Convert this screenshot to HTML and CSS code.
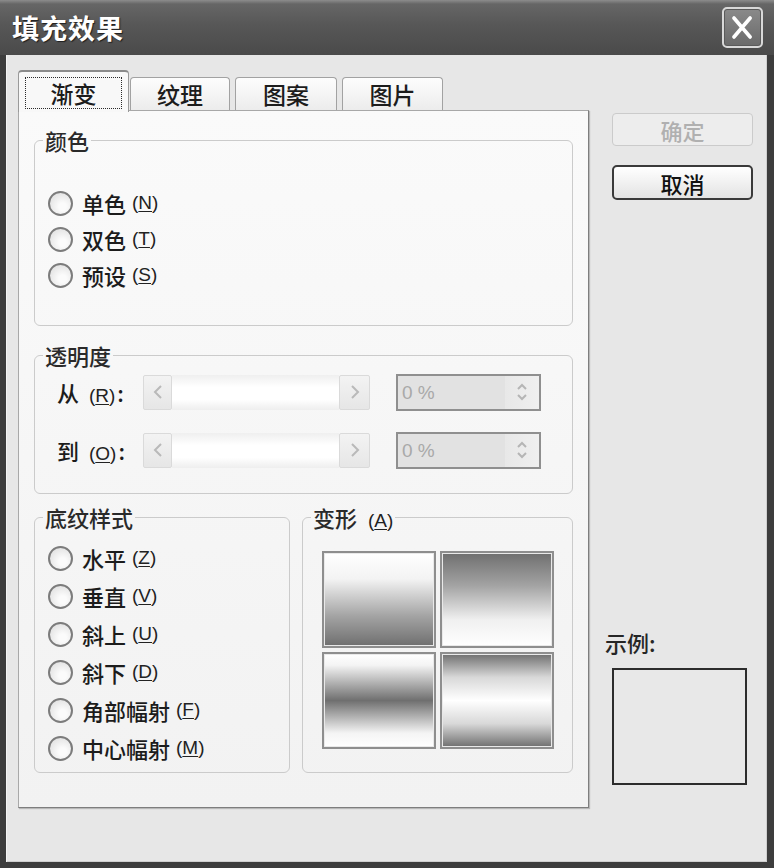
FILE: index.html
```html
<!DOCTYPE html>
<html lang="zh-CN">
<head>
    <meta charset="UTF-8">
    <meta name="viewport" content="width=device-width, initial-scale=1.0">
    <title>填充效果</title>
    <link rel="stylesheet" href="styles.css">
</head>
<body>
    <div class="window">
        <div class="titlebar">
            <span class="title">填充效果</span>
            <button class="close" aria-label="关闭">
                <svg viewBox="0 0 41 41" width="37" height="37">
                    <path d="M11 10 L29 31 M29 10 L11 31" stroke="#fff" stroke-width="4" stroke-linecap="round" fill="none"/>
                </svg>
            </button>
        </div>

        <div class="client">
            <div class="tabs-area">
                <div class="tab-strip">
                    <div class="tab active"><span class="focus">渐变</span></div>
                    <div class="tab">纹理</div>
                    <div class="tab">图案</div>
                    <div class="tab">图片</div>
                </div>

                <div class="tab-panel">
                    <fieldset class="group group-color">
                        <legend>颜色</legend>
                        <label class="radio"><span class="dot"></span>单色 <span class="key">(<u>N</u>)</span></label>
                        <label class="radio"><span class="dot"></span>双色 <span class="key">(<u>T</u>)</span></label>
                        <label class="radio"><span class="dot"></span>预设 <span class="key">(<u>S</u>)</span></label>
                    </fieldset>

                    <fieldset class="group group-alpha">
                        <legend>透明度</legend>
                        <div class="alpha-row">
                            <span class="row-label">从 <span class="key">(<u>R</u>)</span>:</span>
                            <div class="scroll">
                                <span class="sbtn"><svg viewBox="0 0 10 16" width="10" height="16"><path d="M8 2 L2 8 L8 14" stroke="#b9b9b9" stroke-width="2" fill="none"/></svg></span>
                                <span class="track"></span>
                                <span class="sbtn"><svg viewBox="0 0 10 16" width="10" height="16"><path d="M2 2 L8 8 L2 14" stroke="#b9b9b9" stroke-width="2" fill="none"/></svg></span>
                            </div>
                            <div class="spin">
                                <span class="val">0 %</span>
                                <span class="arrows">
                                    <svg viewBox="0 0 12 22" width="12" height="22"><path d="M2 8 L6 4 L10 8 M2 14 L6 18 L10 14" stroke="#b5b5b5" stroke-width="2" fill="none"/></svg>
                                </span>
                            </div>
                        </div>
                        <div class="alpha-row">
                            <span class="row-label">到 <span class="key">(<u>O</u>)</span>:</span>
                            <div class="scroll">
                                <span class="sbtn"><svg viewBox="0 0 10 16" width="10" height="16"><path d="M8 2 L2 8 L8 14" stroke="#b9b9b9" stroke-width="2" fill="none"/></svg></span>
                                <span class="track"></span>
                                <span class="sbtn"><svg viewBox="0 0 10 16" width="10" height="16"><path d="M2 2 L8 8 L2 14" stroke="#b9b9b9" stroke-width="2" fill="none"/></svg></span>
                            </div>
                            <div class="spin">
                                <span class="val">0 %</span>
                                <span class="arrows">
                                    <svg viewBox="0 0 12 22" width="12" height="22"><path d="M2 8 L6 4 L10 8 M2 14 L6 18 L10 14" stroke="#b5b5b5" stroke-width="2" fill="none"/></svg>
                                </span>
                            </div>
                        </div>
                    </fieldset>

                    <div class="bottom-row">
                        <fieldset class="group group-style">
                            <legend>底纹样式</legend>
                            <label class="radio"><span class="dot"></span>水平 <span class="key">(<u>Z</u>)</span></label>
                            <label class="radio"><span class="dot"></span>垂直 <span class="key">(<u>V</u>)</span></label>
                            <label class="radio"><span class="dot"></span>斜上 <span class="key">(<u>U</u>)</span></label>
                            <label class="radio"><span class="dot"></span>斜下 <span class="key">(<u>D</u>)</span></label>
                            <label class="radio"><span class="dot"></span>角部幅射 <span class="key">(<u>F</u>)</span></label>
                            <label class="radio"><span class="dot"></span>中心幅射 <span class="key">(<u>M</u>)</span></label>
                        </fieldset>

                        <fieldset class="group group-variant">
                            <legend>变形 <span class="key">(<u>A</u>)</span></legend>
                            <div class="variants">
                                <div class="variant v1"></div>
                                <div class="variant v2"></div>
                                <div class="variant v3"></div>
                                <div class="variant v4"></div>
                            </div>
                        </fieldset>
                    </div>
                </div>
            </div>

            <div class="side">
                <button class="btn" disabled>确定</button>
                <button class="btn btn-cancel">取消</button>
                <div class="sample-label">示例:</div>
                <div class="sample"></div>
            </div>
        </div>
    </div>
</body>
</html>
```

FILE: styles.css
```css
/* General */
body {
    margin: 0;
    background-color: #2e2e2e;
    font-family: "Noto Sans CJK SC", "Liberation Sans", sans-serif;
    font-weight: 500;
    color: #1c1c1c;
}

.window {
    width: 774px;
    height: 868px;
    display: flex;
    flex-direction: column;
    background-color: #3d3d3d;
}

/* Title bar */
.titlebar {
    height: 55px;
    flex-shrink: 0;
    display: flex;
    align-items: center;
    justify-content: space-between;
    padding: 0 11px 0 12px;
    box-sizing: border-box;
    background: linear-gradient(#8c8c8c 0, #666 4px, #575757 45%, #4a4a4a 100%);
}

.title {
    color: #fff;
    font-size: 27px;
    font-weight: 700;
    letter-spacing: 1px;
    text-shadow: 1px 1px 1px #1e1e1e;
}

.close {
    width: 41px;
    height: 41px;
    padding: 0;
    display: flex;
    align-items: center;
    justify-content: center;
    border: 2px solid #d8d8d8;
    border-radius: 5px;
    background: linear-gradient(#8a8a8a, #6a6a6a);
    box-shadow: inset 0 0 0 1px #5a5a5a;
}

/* Client area */
.client {
    flex: 1;
    display: flex;
    padding: 15px 0 0 12px;
    margin: 0 7px 6px 6px;
    background-color: #e7e7e7;
    box-shadow: inset 1px 0 0 #f4f4f4, inset -1px -1px 0 #cfcfcf;
}

.tabs-area {
    width: 571px;
}

/* Tabs */
.tab-strip {
    height: 40px;
    display: flex;
    align-items: flex-end;
}

.tab {
    height: 33px;
    box-sizing: border-box;
    display: flex;
    align-items: center;
    justify-content: center;
    font-size: 23px;
    border: 1px solid #a2a2a2;
    border-bottom: none;
    border-radius: 4px 4px 0 0;
    background: linear-gradient(#fdfdfd, #ececec);
    margin-left: 5px;
    width: 102px;
}

.tab:nth-child(2) {
    margin-left: 1px;
    width: 100px;
}

.tab:nth-child(4) {
    width: 101px;
}

.tab.active {
    position: relative;
    z-index: 1;
    margin-left: 0;
    width: 111px;
    height: 42px;
    margin-bottom: -2px;
    background: #f8f8f8;
    border-color: #9a9a9a;
    border-top: 2px solid #8a8a8a;
}

.focus {
    display: flex;
    align-items: center;
    justify-content: center;
    width: 95px;
    height: 30px;
    border: 1px dotted #2a2a2a;
    margin-top: 2px;
}

.tab-panel {
    height: 698px;
    box-sizing: border-box;
    padding: 17px 15px 0 15px;
    border: 1px solid;
    border-color: #a8a8a8 #7e7e7e #7e7e7e #a8a8a8;
    background: linear-gradient(#fafafa, #f2f2f2);
    box-shadow: 1px 1px 1px rgba(0, 0, 0, 0.2);
}

/* Group boxes */
.group {
    margin: 0;
    padding: 0 12px 0 13px;
    min-width: 0;
    border: 1px solid #cbcbcb;
    border-radius: 6px;
}

.group legend {
    font-size: 22px;
    line-height: 24px;
    padding: 0 2px;
    margin-left: -5px;
    color: #2a2a2a;
}

.group-color {
    padding-top: 33px;
    padding-bottom: 32px;
}

.group-alpha {
    margin-top: 17px;
    padding-top: 6px;
    padding-bottom: 24px;
}

.bottom-row {
    margin-top: 11px;
    display: flex;
    gap: 12px;
}

.group-style {
    width: 256px;
    box-sizing: border-box;
    padding-top: 10px;
    padding-bottom: 5px;
}

.group-variant {
    flex: 1;
    padding-top: 22px;
    padding-bottom: 23px;
}

/* Radios */
.radio {
    height: 36px;
    display: flex;
    align-items: center;
    font-size: 22px;
}

.group-style .radio {
    height: 38px;
}

.dot {
    width: 25px;
    height: 25px;
    box-sizing: border-box;
    border: 2px solid #7c7c7c;
    border-radius: 50%;
    background: radial-gradient(circle at 60% 65%, #fbfbfb 20%, #dedede 90%);
    margin-right: 9px;
    flex-shrink: 0;
}

.key {
    font-family: "Liberation Sans", sans-serif;
    font-size: 19px;
    line-height: 0;
    margin-left: 6px;
    color: #222;
}

.key u {
    text-underline-offset: 2px;
}

/* Transparency rows */
.alpha-row {
    height: 38px;
    display: flex;
    align-items: center;
}

.alpha-row + .alpha-row {
    margin-top: 20px;
}

.row-label {
    width: 86px;
    margin-left: 9px;
    font-size: 22px;
    white-space: nowrap;
}

.row-label .key {
    margin-left: 5px;
    margin-right: 2px;
}

.scroll {
    width: 227px;
    height: 35px;
    display: flex;
}

.sbtn {
    width: 29px;
    display: flex;
    align-items: center;
    justify-content: center;
    border: 1px solid #dadada;
    border-radius: 2px;
    background: linear-gradient(#f3f3f3, #e6e6e6);
    box-sizing: border-box;
}

.sbtn:last-child {
    width: 31px;
}

.track {
    flex: 1;
    background: linear-gradient(#efefef, #ffffff 35%, #ffffff 70%, #eeeeee);
}

.spin {
    width: 145px;
    height: 37px;
    margin-left: 26px;
    box-sizing: border-box;
    display: flex;
    border: 2px solid #8f8f8f;
    background-color: #e2e2e2;
}

.val {
    flex: 1;
    padding-left: 4px;
    font-family: "Liberation Sans", sans-serif;
    font-size: 19px;
    line-height: 33px;
    color: #a9a9a9;
}

.arrows {
    width: 34px;
    display: flex;
    align-items: center;
    justify-content: center;
    background: linear-gradient(90deg, #e8e8e8, #efefef);
}

/* Variants */
.variants {
    width: 232px;
    margin: 0 auto;
    display: grid;
    grid-template-columns: 114px 114px;
    grid-template-rows: 97px 97px;
    gap: 4px;
}

.variant {
    border: 2px solid #8e8e8e;
    box-shadow: inset 0 0 0 1px #e9e9e9;
}

.v1 {
    background: linear-gradient(#ffffff 0%, #f3f3f3 28%, #a3a3a3 68%, #6f6f6f 100%);
}

.v2 {
    background: linear-gradient(#6f6f6f 0%, #a3a3a3 35%, #f0f0f0 72%, #ffffff 100%);
}

.v3 {
    background: linear-gradient(#ffffff 0%, #f4f4f4 12%, #6f6f6f 50%, #f4f4f4 85%, #ffffff 100%);
}

.v4 {
    background: linear-gradient(#6f6f6f 0%, #d8d8d8 25%, #ffffff 50%, #d8d8d8 75%, #6f6f6f 100%);
}

/* Right column */
.side {
    width: 141px;
    margin-left: 23px;
    padding-top: 43px;
    display: flex;
    flex-direction: column;
}

.btn {
    height: 33px;
    padding: 0;
    font-family: "Noto Sans CJK SC", sans-serif;
    font-weight: 500;
    font-size: 22px;
    color: #b0b0b0;
    border: 1px solid #cbcbcb;
    border-radius: 4px;
    background: #ededed;
}

.btn-cancel {
    height: 35px;
    margin-top: 19px;
    color: #111;
    border: 2px solid #3a3a3a;
    border-radius: 5px;
    background: linear-gradient(#ffffff, #e3e3e3);
}

.sample-label {
    margin-top: 429px;
    margin-left: -7px;
    font-size: 22px;
    line-height: 26px;
    color: #262626;
}

.sample {
    width: 135px;
    height: 117px;
    margin-top: 13px;
    box-sizing: border-box;
    border: 2px solid #2c2c2c;
    background-color: #e8e8e8;
}
```
